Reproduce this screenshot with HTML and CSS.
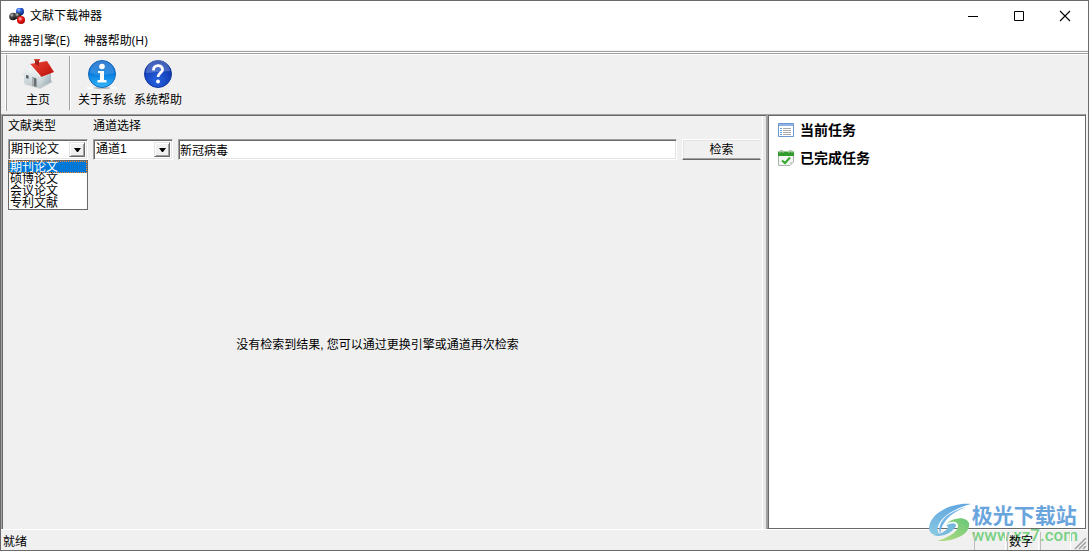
FILE: index.html
```html
<!DOCTYPE html>
<html lang="zh-CN">
<head>
<meta charset="utf-8">
<title>文献下载神器</title>
<link rel="stylesheet" href="styles.css">
</head>
<body>
<div class="window">
  <header class="titlebar">
    <svg class="app-icon" width="16" height="16" viewBox="0 0 16 16" aria-hidden="true">
      <defs>
        <radialGradient id="gBlue" cx=".35" cy=".3" r=".7"><stop offset="0" stop-color="#9cc4ff"/><stop offset=".4" stop-color="#2b62d8"/><stop offset="1" stop-color="#0b2a80"/></radialGradient>
        <radialGradient id="gGray" cx=".35" cy=".3" r=".7"><stop offset="0" stop-color="#c8c8c8"/><stop offset=".4" stop-color="#4a4a4a"/><stop offset="1" stop-color="#111"/></radialGradient>
        <radialGradient id="gRed" cx=".4" cy=".35" r=".7"><stop offset="0" stop-color="#ffd0d0"/><stop offset=".4" stop-color="#f01818"/><stop offset="1" stop-color="#900"/></radialGradient>
      </defs>
      <circle cx="11" cy="3.500" r="4" fill="url(#gBlue)"/>
      <circle cx="4" cy="8.500" r="3.800" fill="url(#gGray)"/>
      <circle cx="9" cy="8" r="3.300" fill="url(#gGray)"/>
      <circle cx="12" cy="12" r="4" fill="url(#gRed)"/>
    </svg>
    <h1 class="title">文献下载神器</h1>
    <div class="window-buttons">
      <button class="window-button" aria-label="最小化"><svg width="12" height="12" viewBox="0 0 12 12"><path d="M1 6.500H11" stroke="#000"/></svg></button>
      <button class="window-button" aria-label="最大化"><svg width="12" height="12" viewBox="0 0 12 12"><path d="M1.500 1.500H10.500V10.500H1.500Z" fill="none" stroke="#000"/></svg></button>
      <button class="window-button" aria-label="关闭"><svg width="12" height="12" viewBox="0 0 12 12"><path d="M1 1L11 11M11 1L1 11" stroke="#000" stroke-width="1.100"/></svg></button>
    </div>
  </header>
  <nav class="menubar">
    <button class="menu">神器引擎(E)</button>
    <button class="menu">神器帮助(H)</button>
  </nav>
  <div class="toolbar">
    <span class="grip"></span>
    <button class="tool">
      <svg width="34" height="32" viewBox="0 0 34 32" aria-hidden="true">
        <defs>
          <linearGradient id="wall" x1="0" y1="0" x2="0" y2="1"><stop offset="0" stop-color="#fff"/><stop offset="1" stop-color="#b9c6cb"/></linearGradient>
          <linearGradient id="side" x1="0" y1="0" x2="1" y2="1"><stop offset="0" stop-color="#edf2f4"/><stop offset="1" stop-color="#8d9fa8"/></linearGradient>
          <linearGradient id="roof" x1="0" y1="0" x2="1" y2="1"><stop offset="0" stop-color="#ef4838"/><stop offset="1" stop-color="#b90c08"/></linearGradient>
        </defs>
        <path d="M2 26L19 31L32 24L30 22Z" fill="#999" opacity=".35"/>
        <path d="M3 14L9 7L19 17V30L3 25Z" fill="url(#wall)"/>
        <path d="M19 18L30 13V24L19 30Z" fill="url(#side)"/>
        <path d="M9 6L26 3L33 14L20 19Z" fill="url(#roof)"/>
        <path d="M14 6V1.500H18V8Z" fill="#a62218"/><path d="M13 1H19V2.500H13Z" fill="#d14b3b"/>
        <path d="M9 6L20 18.500L18.500 19L9 8.500L2 17L1 16Z" fill="#fff" stroke="#c4cacd" stroke-width=".5"/>
        <path d="M11 19L15.500 20.500V29L11 27.500Z" fill="#686f74"/><path d="M11 19L13 19.700V28L11 27.500Z" fill="#a8afb2"/>
        <path d="M5 17L7.500 17.500V21L5 20Z" fill="#52616b"/>
      </svg>
      <span>主页</span>
    </button>
    <span class="divider"></span>
    <button class="tool">
      <svg width="32" height="32" viewBox="0 0 32 32" aria-hidden="true">
        <defs><linearGradient id="info" x1="0" y1="0" x2="0" y2="1"><stop offset="0" stop-color="#1769c5"/><stop offset=".5" stop-color="#087de0"/><stop offset="1" stop-color="#34b8fa"/></linearGradient></defs>
        <path d="M1 29H31V31H1Z" fill="#fff"/><ellipse cx="16" cy="30" rx="9" ry="1" fill="#bbb"/>
        <circle cx="16" cy="16" r="13.500" fill="url(#info)" stroke="#1469be"/>
        <path d="M4 15A12 12 0 0 1 28 15Q16 19 4 15Z" fill="#fff" opacity=".15"/>
        <circle cx="16" cy="8.500" r="2.800" fill="#fff"/>
        <path d="M12 13H18V22H20.500V24.500H11.500V22H14V15H12Z" fill="#fff"/>
      </svg>
      <span>关于系统</span>
    </button>
    <button class="tool">
      <svg width="32" height="32" viewBox="0 0 32 32" aria-hidden="true">
        <defs><radialGradient id="help" cx=".45" cy=".75" r=".75"><stop offset="0" stop-color="#2863e0"/><stop offset=".6" stop-color="#1644bd"/><stop offset="1" stop-color="#0b2f9e"/></radialGradient></defs>
        <circle cx="16" cy="16" r="13.500" fill="url(#help)" stroke="#123a9e"/>
        <path d="M4 15A12 12 0 0 1 28 13Q16 14 4 15Z" fill="#fff" opacity=".22"/>
        <path d="M11.500 12.500C11 6 21 6 20.500 12C20 15 16 15 16 19" fill="none" stroke="#fff" stroke-width="2.800"/>
        <circle cx="16" cy="23.500" r="1.900" fill="#fff"/>
      </svg>
      <span>系统帮助</span>
    </button>
  </div>
  <main class="content">
    <section class="search-panel">
      <form class="search">
        <label class="label" for="type">文献类型</label>
        <label class="label" for="channel">通道选择</label>
        <div class="combo">
          <select id="type"><option>期刊论文</option><option>硕博论文</option><option>会议论文</option><option>专利文献</option></select>
          <span class="arrow"><svg width="7" height="4" viewBox="0 0 7 4"><path d="M0 0H7L4 4H3Z"/></svg></span>
          <ul class="options" role="listbox" aria-label="文献类型">
            <li class="option selected" role="option" aria-selected="true">期刊论文</li>
            <li class="option" role="option">硕博论文</li>
            <li class="option" role="option">会议论文</li>
            <li class="option" role="option">专利文献</li>
          </ul>
        </div>
        <div class="combo">
          <select id="channel"><option>通道1</option></select>
          <span class="arrow"><svg width="7" height="4" viewBox="0 0 7 4"><path d="M0 0H7L4 4H3Z"/></svg></span>
        </div>
        <input class="query" type="text" value="新冠病毒" aria-label="检索词">
        <button class="submit" type="button">检索</button>
      </form>
      <p class="empty">没有检索到结果, 您可以通过更换引擎或通道再次检索</p>
    </section>
    <aside class="tasks">
      <button class="task">
        <svg width="16" height="16" viewBox="0 0 16 16" aria-hidden="true">
          <path d="M.5 1.500H15.500V14.500H.5Z" fill="#fff" stroke="#6f98cf"/><path d="M1 2H15V4H1Z" fill="#8eb2e5"/>
          <path d="M2 6.500H4M2 8.500H4M2 10.500H4M2 12.500H4" stroke="#62a1e8"/><path d="M5 6.500H13M5 8.500H13M5 10.500H13M5 12.500H13" stroke="#aaa"/>
        </svg>
        <span>当前任务</span>
      </button>
      <button class="task">
        <svg width="16" height="16" viewBox="0 0 16 16" aria-hidden="true">
          <path d="M.5 2.500H15.500V12L12 15.500H.5Z" fill="#f3f6f3" stroke="#aab5aa"/><path d="M0 1.500H16V6H0Z" fill="#2f9c2b"/>
          <path d="M2 3V.5H5V3M11 3V.5H14V3" fill="none" stroke="#b8c4b8"/><path d="M12 15V12H15Z" fill="#ccd3cc"/>
          <path d="M4 10.500L7 13L12 7.500" fill="none" stroke="#35a92d" stroke-width="2"/>
        </svg>
        <span>已完成任务</span>
      </button>
    </aside>
  </main>
  <footer class="statusbar">
    <span class="status">就绪</span>
    <span class="cell"></span>
    <span class="cell num">数字</span>
    <span class="cell"></span>
    <svg class="resize" width="14" height="14" viewBox="0 0 14 14" aria-hidden="true"><path d="M2 13L13 2M6 13L13 6M10 13L13 10" stroke="#a0a0a0" stroke-width="1.500"/></svg>
  </footer>
  <div class="watermark">
    <svg width="43" height="40" viewBox="0 0 43 40" aria-hidden="true">
      <defs><linearGradient id="swirl" x1="0" y1="0" x2="0" y2="1"><stop offset="0" stop-color="#62a6e2"/><stop offset="1" stop-color="#8bcbe0"/></linearGradient>
      <linearGradient id="leaf" x1="0" y1="1" x2="1" y2="0"><stop offset="0" stop-color="#b6dc80"/><stop offset="1" stop-color="#66c778"/></linearGradient></defs>
      <path d="M42 1C25-1 1 9 0 25C0 30 5 33 12 33C3 26 12 9 42 1Z" fill="url(#swirl)"/>
      <path d="M37 4C21 8 7 18 11 31C13 18 22 10 37 4Z" fill="#73b4e6"/>
      <path d="M17 21C24 14 37 13 40 20C42 31 25 39 8 38C21 34 30 28 29 22C28 18 22 18 17 21Z" fill="url(#leaf)"/>
      <path d="M4 32C14 35 24 29 27 23C27 19 21 20 17 23C23 23 14 32 4 32Z" fill="#75b9dc"/>
    </svg>
    <div><div class="brand">极光下载站</div><div class="site">www.xz7.com</div></div>
  </div>
</div>
</body>
</html>
```
FILE: styles.css
```css
* { box-sizing: border-box; }
body {
  margin: 0;
  font: 12px/16px "Liberation Sans", "Noto Sans CJK SC", sans-serif;
  color: #000;
}
button, input, select { font: inherit; color: inherit; border: 0; margin: 0; padding: 0; border-radius: 0; background: none; }
svg { display: block; flex: none; }

.window {
  position: relative;
  display: flex;
  flex-direction: column;
  min-height: 100vh;
  border: 1px solid #6b696e;
  background: #f0f0f0;
}

.titlebar { display: flex; align-items: center; height: 29px; padding-left: 8px; gap: 5px; background: #fff; }
.title { flex: 1; margin: 0; font-size: 12px; font-weight: 400; }
.window-buttons { display: flex; }
.window-button { display: grid; place-items: center; width: 46px; height: 28px; }

.menubar { display: flex; gap: 14px; height: 20px; padding: 2px 0 0 7px; background: #fff; }
.menu { font-family: "Open Sans", "Noto Sans CJK SC", sans-serif; }

.toolbar {
  display: flex;
  height: 63px;
  margin-top: 1px;
  padding: 3px 0 3px 4px;
  border-top: 1px solid #a0a0a0;
  box-shadow: inset 0 1px #fff, inset 0 2px #a0a0a0, inset 0 3px #fff;
}
.grip { width: 2px; border-left: 1px solid #fff; border-right: 1px solid #a0a0a0; }
.divider { width: 2px; margin: 1px 3px 1px 0; border-left: 1px solid #a0a0a0; border-right: 1px solid #fff; }
.tool { display: flex; flex-direction: column; align-items: center; justify-content: flex-start; width: 56px; padding: 3px 0 0; gap: 2px; white-space: nowrap; }
.grip + .tool { width: 62px; }

.content { flex: 1; display: grid; grid-template-columns: minmax(0, 766fr) minmax(0, 319fr); padding-right: 2px; }
.search-panel {
  display: flex;
  flex-direction: column;
  border: 1px solid #a0a0a0;
  border-width: 1px 1px 0;
  box-shadow: inset 1px 1px #696969, inset -3px 0 #e8e8e8, inset -4px 0 #fff;
  padding: 3px 5px 0 6px;
}
.search {
  display: grid;
  grid-template-columns: 80px 80px minmax(0, 1fr) 79px;
  column-gap: 5px;
  row-gap: 4px;
}
.label { line-height: 17px; }
.label + .label { grid-column: 2 / 5; }

.combo, .query { height: 21px; border: 1px solid; border-color: #a0a0a0 #fff #fff #a0a0a0; box-shadow: inset 1px 1px #696969, inset -1px -1px #e3e3e3; background: #fff; }
.combo { position: relative; display: flex; padding: 2px; }
.combo select { appearance: none; flex: 1; min-width: 0; line-height: 15px; }
.arrow { display: grid; place-items: center; width: 16px; border: 1px solid; border-color: #e3e3e3 #696969 #696969 #e3e3e3; box-shadow: inset 1px 1px #fff, inset -1px -1px #a0a0a0; background: #f0f0f0; pointer-events: none; }
.options { position: absolute; z-index: 2; top: 20px; left: -1px; width: 80px; margin: 0; padding: 0; list-style: none; background: #fff; border: 1px solid #696969; }
.option { height: 12px; padding-left: 1px; line-height: 12px; }
.selected { background: #0078d7; color: #fff; outline: 1px dotted #ff8728; outline-offset: -1px; }
.query { width: 100%; padding: 0 1px; line-height: 17px; }
.submit { height: 21px; border: 1px solid; border-color: #fff #f0f0f0 #696969 #fff; box-shadow: inset 0 -1px #a0a0a0, inset 1px 1px #e3e3e3; background: #f0f0f0; }
.empty { flex: 1; display: grid; place-items: center; margin: 0; padding: 0 14px 0 0; }

.tasks { background: #fff; border: 1px solid; border-color: #a0a0a0 #696969 #696969 #a0a0a0; box-shadow: inset 1px 1px #696969; padding: 5px 10px; display: flex; flex-direction: column; align-items: flex-start; gap: 8px; }
.task { display: flex; align-items: center; gap: 6px; height: 20px; font-size: 14px; font-weight: 700; }

.statusbar { display: flex; align-items: stretch; height: 21px; padding: 2px 1px 0 2px; border-top: 1px solid #fff; }
.status { flex: 1; line-height: 20px; }
.cell { position: relative; z-index: 2; width: 32px; margin-right: 1px; border-left: 1px solid #bcbcbc; border-right: 1px solid #fff; line-height: 20px; }
.num { padding-left: 1px; }
.cell:last-of-type { width: 31px; margin-right: 2px; }
.resize { align-self: flex-end; }

.watermark { position: absolute; right: 10px; bottom: 6px; display: flex; align-items: center; pointer-events: none; }
.brand { font: 700 21px/24px "Noto Sans CJK SC", sans-serif; color: #69a5dc; }
.site { font: 500 17px/18px Roboto, sans-serif; color: #79d184; }
```
